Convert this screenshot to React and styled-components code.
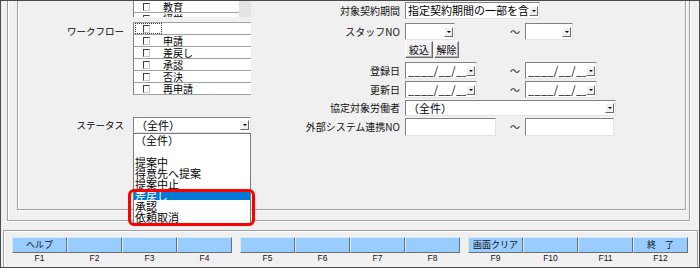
import React from "react";
import styled, { createGlobalStyle } from "styled-components";

const GlobalStyle = createGlobalStyle`
  html, body {
    margin: 0;
    padding: 0;
    background: #f0f0f0;
  }
  body {
    font-family: "Noto Sans CJK JP", "Noto Sans", sans-serif;
    color: #000;
  }
  * {
    box-sizing: border-box;
  }
`;

const Window = styled.div`
  width: 700px;
  height: 268px;
  border: 1px solid #4a4a4a;
  background: #f0f0f0;
  display: flex;
  flex-direction: column;
  overflow: hidden;
`;

const OuterFrame = styled.div`
  flex: none;
  margin-left: 6px;
  width: 683px;
  height: 220px;
  border: 1px solid #a0a0a0;
  border-top: none;
  box-shadow: 0 1px 0 #fff, 1px 0 0 #fff, inset 1px 0 0 #fff;
  padding: 0 3px 10px 9px;
  display: flex;
`;

const InnerFrame = styled.div`
  flex: 1;
  border: 1px solid #a0a0a0;
  border-top: none;
  box-shadow: 0 1px 0 #fff, 1px 0 0 #fff, inset 1px 0 0 #fff;
  display: flex;
  align-items: flex-start;
`;

const LeftCol = styled.div`
  width: 242px;
  flex: none;
  display: flex;
  flex-direction: column;
`;

const RightCol = styled.div`
  flex: 1;
  display: flex;
  flex-direction: column;
`;

const Field = styled.div`
  display: grid;
  grid-template-columns: 106px 118px;
  column-gap: 9px;
  align-items: ${(p) => p.$align || "center"};
  margin-top: ${(p) => p.$mt || 0}px;
`;

const Label = styled.div`
  font-size: 9.5px;
  line-height: 12px;
  text-align: right;
  white-space: nowrap;
  padding-top: ${(p) => p.$pt || 0}px;
`;

const RField = styled.div`
  display: grid;
  grid-template-columns: 140px auto;
  column-gap: 5px;
  align-items: center;
  height: ${(p) => p.$h}px;
  margin-top: ${(p) => p.$mt || 0}px;
`;

const RLabel = styled.div`
  font-size: 10px;
  line-height: 12px;
  text-align: right;
  white-space: nowrap;
  color: #111;
`;

const Range = styled.div`
  display: grid;
  grid-template-columns: 100px 20px auto;
  align-items: center;
  height: 100%;
`;

const Tilde = styled.span`
  font-size: 10px;
  line-height: 12px;
  text-align: center;
  color: #222;
`;

const Sunken = styled.div`
  width: ${(p) => p.$w}px;
  height: 100%;
  background: #fff;
  border: 1px solid;
  border-color: #828282 #e3e3e3 #e3e3e3 #828282;
`;

const Combo = styled(Sunken)`
  display: flex;
  align-items: center;
  padding-left: 2px;
  font-size: 11px;
  line-height: 13px;
  overflow: hidden;
`;

const ComboText = styled.span`
  flex: 1;
  overflow: hidden;
  white-space: nowrap;
  letter-spacing: ${(p) => p.$ls || 0}px;
`;

const DropButton = styled.span`
  flex: none;
  width: 9px;
  height: 10px;
  margin-right: 1px;
  background: #f0f0f0;
  border: 1px solid;
  border-color: #fff #6a6a6a #6a6a6a #fff;
  display: flex;
  align-items: center;
  justify-content: center;

  &::after {
    content: "";
    width: 0;
    height: 0;
    border-left: 2px solid transparent;
    border-right: 2px solid transparent;
    border-top: 2px solid #000;
  }
`;

const ButtonPair = styled.div`
  display: flex;
  gap: 1px;
  height: 100%;
`;

const SmallButton = styled.button`
  width: ${(p) => p.$w}px;
  height: 100%;
  padding: 0;
  font-family: inherit;
  font-size: 10px;
  line-height: 12px;
  color: #000;
  background: #f0f0f0;
  border: 1px solid;
  border-color: #fff #696969 #696969 #fff;
  box-shadow: inset -1px -1px 0 #b4b4b4;
`;

const CheckList = styled.div`
  display: flex;
  height: ${(p) => p.$h}px;
  overflow: hidden;
  border-top: ${(p) => (p.$framed ? "1px solid #a0a0a0" : "none")};
`;

const ListBody = styled.div`
  flex: 1;
  border-left: 1px solid #828282;
  display: flex;
  flex-direction: column;
`;

const ScrollTrack = styled.div`
  width: 12px;
  flex: none;
  background: #e4e4e4;
`;

const Row = styled.div`
  flex: none;
  height: 12px;
  background: #fff;
  border-bottom: 1px solid #a0a0a0;
  display: flex;
  align-items: center;
  padding-left: 1px;
  font-size: 10px;
  line-height: 11px;
  white-space: nowrap;
`;

const CheckCell = styled.span`
  width: 27px;
  height: 11px;
  flex: none;
  display: flex;
  align-items: center;
  padding-left: 7px;
  border: 1px dotted ${(p) => (p.$focus ? "#333" : "transparent")};
`;

const Box = styled.span`
  width: 7px;
  height: 8px;
  background: #fff;
  border: 1px solid;
  border-color: #404040 #c8c8c8 #c8c8c8 #404040;
`;

const RowText = styled.span`
  margin-left: 1px;
`;

const StatusCell = styled.div`
  position: relative;
  height: 16px;
`;

const Popup = styled.div`
  position: absolute;
  top: 100%;
  left: 0;
  width: 118px;
  height: 91px;
  background: #fff;
  border: 1px solid #7a7a7a;
  padding-top: 1px;
  z-index: 2;
`;

const PopItem = styled.div`
  height: 11px;
  line-height: 11px;
  font-size: 11px;
  padding-left: 1px;
  white-space: nowrap;
  overflow: hidden;
  color: ${(p) => (p.$selected ? "#fff" : "#000")};
  background: ${(p) =>
    p.$selected
      ? "linear-gradient(transparent 2px, #0078d7 2px, #0078d7 10px, transparent 10px)"
      : "transparent"};
`;

const Highlight = styled.div`
  position: absolute;
  left: -5px;
  top: 72px;
  width: 127px;
  height: 37px;
  border: 3px solid #ff0000;
  border-radius: 6px;
  z-index: 3;
  pointer-events: none;
`;

const FKeyBar = styled.div`
  flex: 1;
  margin: 9px 1px 0 2px;
  border-top: 1px solid #a0a0a0;
  border-left: 1px solid #a0a0a0;
  border-right: 1px solid #a0a0a0;
  box-shadow: inset 1px 1px 0 #fff;
  padding: 6px 0 0 8px;
  display: flex;
  gap: 8px;
`;

const FKeyGroup = styled.div`
  display: flex;
`;

const FKey = styled.div`
  width: 55px;
  display: flex;
  flex-direction: column;
`;

const FKeyButton = styled.div`
  height: 16px;
  background: #99ccff;
  border: 1px solid;
  border-color: #d7ebff #6f6f6f #6f6f6f #d7ebff;
  font-size: 9px;
  line-height: 14px;
  text-align: center;
  white-space: pre;
  color: #111;
`;

const FKeyLabel = styled.div`
  font-family: "Liberation Sans", Arial, sans-serif;
  font-size: 8.5px;
  line-height: 10px;
  text-align: center;
  color: #111;
`;

const workflow = ["", "申請", "差戻し", "承認", "否決", "再申請"];
const statuses = ["（全件）", "", "提案中", "得意先へ提案", "提案中止", "差戻し", "承認", "依頼取消"];
const fkeys = [
  ["ヘルプ", "", "", ""],
  ["", "", "", ""],
  ["画面クリア", "", "", "終　了"],
];

function ComboBox({ w, text, ls }) {
  return (
    <Combo $w={w}>
      <ComboText $ls={ls}>{text}</ComboText>
      <DropButton />
    </Combo>
  );
}

function CheckRow({ label, focus }) {
  return (
    <Row>
      <CheckCell $focus={focus}>
        <Box />
      </CheckCell>
      <RowText>{label}</RowText>
    </Row>
  );
}

export default function App() {
  return (
    <>
      <GlobalStyle />
      <Window>
        <OuterFrame>
          <InnerFrame>
            <LeftCol>
              <Field>
                <Label />
                <CheckList $h={16}>
                  <ListBody>
                    <CheckRow label="教育" />
                    <CheckRow label="経営" />
                  </ListBody>
                  <ScrollTrack />
                </CheckList>
              </Field>

              <Field $mt={5} $align="start">
                <Label $pt={3}>ワークフロー</Label>
                <CheckList $h={73} $framed>
                  <ListBody>
                    {workflow.map((w, i) => (
                      <CheckRow key={i} label={w} focus={i === 0} />
                    ))}
                  </ListBody>
                </CheckList>
              </Field>

              <Field $mt={22}>
                <Label>ステータス</Label>
                <StatusCell>
                  <ComboBox w={118} text="（全件）" />
                  <Popup>
                    {statuses.map((s, i) => (
                      <PopItem key={i} $selected={i === 5}>
                        {s}
                      </PopItem>
                    ))}
                  </Popup>
                  <Highlight />
                </StatusCell>
              </Field>
            </LeftCol>

            <RightCol>
              <RField $h={17} $mt={1}>
                <RLabel>対象契約期間</RLabel>
                <ComboBox w={135} text="指定契約期間の一部を含む" />
              </RField>

              <RField $h={17} $mt={4}>
                <RLabel>スタッフNO</RLabel>
                <Range>
                  <ComboBox w={50} text="" />
                  <Tilde>～</Tilde>
                  <ComboBox w={48} text="" />
                </Range>
              </RField>

              <RField $h={17} $mt={1}>
                <RLabel />
                <ButtonPair>
                  <SmallButton $w={28}>絞込</SmallButton>
                  <SmallButton $w={25}>解除</SmallButton>
                </ButtonPair>
              </RField>

              <RField $h={17} $mt={4}>
                <RLabel>登録日</RLabel>
                <Range>
                  <ComboBox w={72} text="____/__/__" ls={0.3} />
                  <Tilde>～</Tilde>
                  <ComboBox w={72} text="____/__/__" ls={0.3} />
                </Range>
              </RField>

              <RField $h={17} $mt={2}>
                <RLabel>更新日</RLabel>
                <Range>
                  <ComboBox w={72} text="____/__/__" ls={0.3} />
                  <Tilde>～</Tilde>
                  <ComboBox w={72} text="____/__/__" ls={0.3} />
                </Range>
              </RField>

              <RField $h={16} $mt={2}>
                <RLabel>協定対象労働者</RLabel>
                <ComboBox w={211} text="（全件）" />
              </RField>

              <RField $h={18} $mt={2}>
                <RLabel>外部システム連携NO</RLabel>
                <Range>
                  <Sunken $w={91} />
                  <Tilde>～</Tilde>
                  <Sunken $w={89} />
                </Range>
              </RField>
            </RightCol>
          </InnerFrame>
        </OuterFrame>

        <FKeyBar>
          {fkeys.map((group, g) => (
            <FKeyGroup key={g}>
              {group.map((text, i) => (
                <FKey key={i}>
                  <FKeyButton>{text}</FKeyButton>
                  <FKeyLabel>F{g * 4 + i + 1}</FKeyLabel>
                </FKey>
              ))}
            </FKeyGroup>
          ))}
        </FKeyBar>
      </Window>
    </>
  );
}
